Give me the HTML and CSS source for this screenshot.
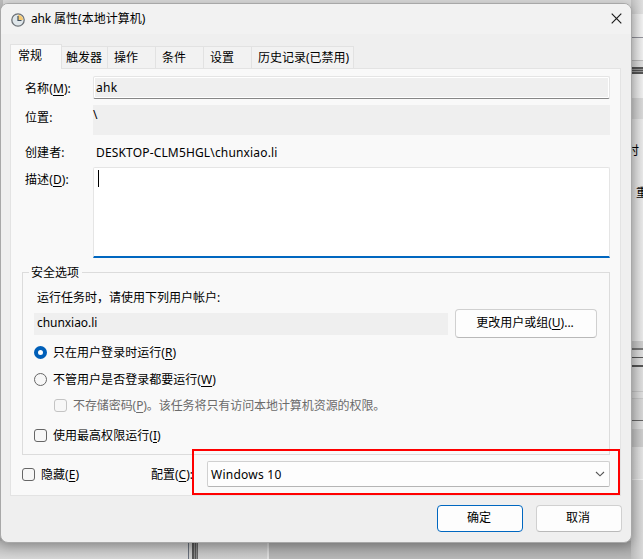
FILE: index.html
```html
<!DOCTYPE html>
<html lang="zh-CN">
<head>
<meta charset="utf-8">
<title>ahk 属性(本地计算机)</title>
<link rel="stylesheet" href="styles.css">
</head>
<body>
<div class="desktop">
  <div class="behind-left"><i></i><i></i><i></i><i></i><i></i></div>
  <div class="behind-right"></div>
  <span class="behind-text first">时</span>
  <span class="behind-text second">重</span>
  <div class="behind-bottom"></div>
  <main class="dialog">
    <header class="titlebar">
      <svg class="clock" viewBox="0 0 14 14" width="14" height="14">
        <circle cx="7" cy="7" r="6.2" fill="#dfe6ea" stroke="#6c7176" stroke-width="1.3"/>
        <path d="M7 7V1.8A5.2 5.2 0 0 1 12.2 7Z" fill="#f6ca73"/>
        <path d="M7 3V7.5H10.5" fill="none" stroke="#42505d" stroke-width="1.2"/>
      </svg>
      <h1><span class="app">ahk</span> 属性(本地计算机)</h1>
      <svg class="close" viewBox="0 0 11 11" width="11" height="11"><path d="M.7.7L10.3 10.3M10.3.7L.7 10.3" stroke="#191919" stroke-width="1.15"/></svg>
    </header>
    <nav class="tabs">
      <span class="tab selected">常规</span>
      <span class="tab t2">触发器</span>
      <span class="tab t3">操作</span>
      <span class="tab t4">条件</span>
      <span class="tab t5">设置</span>
      <span class="tab t6">历史记录(已禁用)</span>
    </nav>
    <section class="panel">
      <div class="row name"><label>名称(<u>M</u>):</label><div class="field input">ahk</div></div>
      <div class="row location"><label>位置:</label><div class="field">\</div></div>
      <div class="row creator"><label>创建者:</label><span class="account">DESKTOP-CLM5HGL\chunxiao.li</span></div>
      <div class="row description"><label>描述(<u>D</u>):</label><div class="textarea"><i class="caret"></i></div></div>
      <div class="group">
        <span class="legend">安全选项</span>
        <p class="prompt">运行任务时，请使用下列用户帐户:</p>
        <div class="userline"><div class="user">chunxiao.li</div><button class="change">更改用户或组(<u>U</u>)...</button></div>
        <label class="option o1"><i class="radio on"></i><span>只在用户登录时运行(<u>R</u>)</span></label>
        <label class="option o2"><i class="radio"></i><span>不管用户是否登录都要运行(<u>W</u>)</span></label>
        <label class="option o3 disabled"><i class="box"></i><span>不存储密码(<u>P</u>)。该任务将只有访问本地计算机资源的权限。</span></label>
        <label class="option o4"><i class="box"></i><span>使用最高权限运行(<u>I</u>)</span></label>
      </div>
      <div class="bottom">
        <label class="option hide"><i class="box"></i><span>隐藏(<u>E</u>)</span></label>
        <span class="config">配置(<u>C</u>):</span>
        <div class="select"><span>Windows 10</span><svg viewBox="0 0 10 6" width="10" height="6"><path d="M1 1L5 4.8L9 1" fill="none" stroke="#555" stroke-width="1.1"/></svg></div>
      </div>
    </section>
    <footer class="actions"><button class="primary">确定</button><button>取消</button></footer>
  </main>
  <div class="highlight"></div>
</div>
</body>
</html>
```

FILE: styles.css
```css
* { box-sizing: border-box; }
body {
  margin: 0;
  font: 12px/16px "Noto Sans", "Noto Sans CJK SC", sans-serif;
  color: #000;
}
.desktop {
  position: relative;
  width: 643px;
  height: 559px;
  overflow: hidden;
  background: linear-gradient(#d9d9d9 0, #d9d9d9 20px, #d2d2d2 500px, #aaa 543px, #c4c4c4 559px);
}
.behind-left { position: absolute; left: 0; top: 0; width: 3px; height: 110px; background: #bcbcbc; }
.behind-left i { display: block; height: 2px; margin-top: 19px; background: #6f8596; }
.behind-right {
  position: absolute;
  left: 631px;
  top: 0;
  width: 12px;
  height: 559px;
  background:
    linear-gradient(90deg, #0002, #0000),
    linear-gradient(#dedede 0 14px, #f0f0f0 14px 37px, #92929a 37px 38px, #eee 38px 60px, #bbb 60px 61px, #ddd 61px 67px, #555 67px 69px, #999 69px 70px, #555 70px 71px, #999 71px 72px, #555 72px 74px, #eee 74px 98px, #d8d8d8 98px 119px, #e8e8e8 119px 341px, #ccc 341px 348px, #777 348px 350px, #ddd 350px 357px, #555 357px 358px, #ddd 358px 365px, #555 365px 367px, #ddd 367px 391px, #c8c8c8 391px 392px, #ddd 392px 398px, #c8c8c8 398px 399px, #d6d6d6 399px 420px, #666 420px 421px, #ddd 421px 429px, #ccc 429px 447px, #e2e2e2 447px 479px, #f0f0f0 479px 480px, #d8d8d8 480px);
}
.behind-text { position: absolute; white-space: nowrap; }
.behind-text.first { left: 627px; top: 143px; }
.behind-text.second { left: 636px; top: 185px; }
.behind-bottom {
  position: absolute;
  left: 0;
  top: 541px;
  width: 631px;
  height: 18px;
  background:
    linear-gradient(#0002, #0000),
    linear-gradient(90deg, #d5d5d5 0 188px, #69717d 188px 189px, #ccc 189px 192px, #555 192px 194px, #888 194px 195px, #555 195px 196px, #888 196px 197px, #666 197px 198px, #ccc 198px 267px, #ddd 267px 269px, #b7b7b7 269px);
}
.dialog {
  position: absolute;
  left: 0;
  top: 3px;
  width: 632px;
  height: 540px;
  border: 1px solid #a8a8a8;
  border-radius: 8px;
  background: #efefef;
  box-shadow: 0 3px 12px #0004;
  overflow: hidden;
}
.titlebar { display: flex; align-items: center; height: 30px; padding: 0 9px 0 10px; background: #f2f2f2; }
h1 { flex: 1; margin: 0 0 0 6px; font-size: 12px; font-weight: 400; white-space: nowrap; }
.app { letter-spacing: -.2px; }
.clock { margin-top: 1px; }
.close { margin-top: -1px; }
.tabs { display: flex; align-items: flex-end; height: 34px; margin-left: 9px; }
.tab { height: 22px; padding: 3px 0 0 6px; border: solid #e2e2e2; border-width: 1px 1px 0 0; background: #f2f2f2; white-space: nowrap; }
.tab.selected { position: relative; width: 52px; height: 25px; margin-bottom: -1px; padding: 3px 0 0 7px; border-left-width: 1px; background: #f9f9f9; }
.t2 { width: 46px; padding-left: 4px; }
.t3, .t4, .t5 { width: 48px; }
.t6 { width: 102px; }
.panel { width: 611px; height: 428px; margin-left: 9px; border: 1px solid #e3e3e3; background: #f9f9f9; }
.row { display: grid; grid-template-columns: 68px 517px; margin-left: 14px; }
.row > label { white-space: nowrap; letter-spacing: .1px; }
u { text-underline-offset: 2px; text-decoration-skip-ink: none; text-decoration-thickness: 1px; }
.name { height: 29px; padding-top: 7px; }
.name label { padding-top: 5px; }
.field { height: 30px; background: #efefef; line-height: 20px; }
.input { height: 23px; padding-left: 2px; border: 1px solid #e5e5e5; border-bottom-color: #868686; border-radius: 2px; box-shadow: inset 0 0 0 1px #fff; line-height: 22px; letter-spacing: .25px; }
.location { height: 38px; padding-top: 7px; }
.location label { padding-top: 5px; }
.creator { height: 25px; padding-top: 9px; }
.account { padding-left: 3px; white-space: nowrap; letter-spacing: .16px; }
.description { height: 97px; padding-top: 6px; }
.description label { padding-top: 5px; }
.textarea { height: 91px; padding: 2px 0 0 4px; border: 1px solid #e5e5e5; border-bottom: 2px solid #0067c0; border-radius: 2px 2px 0 0; background: #fff; }
.caret { display: block; width: 1px; height: 17px; background: #000; }
.group { position: relative; height: 183px; width: 588px; margin: 14px 0 0 11px; padding: 17px 12px 0 11px; border: 1px solid #dcdcdc; }
.legend { position: absolute; left: 6px; top: -8px; padding: 0 3px 0 2px; background: #f9f9f9; }
.prompt { margin: 0 0 0 3px; white-space: nowrap; }
.userline { display: flex; justify-content: space-between; align-items: center; height: 29px; margin-top: 3px; }
.user { width: 414px; height: 22px; padding-left: 3px; background: #efefef; line-height: 20px; letter-spacing: -.05px; }
button { width: 86px; height: 27px; padding: 0 2px 1px 0; border: 1px solid #d0d0d0; border-bottom-color: #b9b9b9; border-radius: 4px; background: #fdfdfd; color: #000; font: inherit; }
.change { width: 142px; height: 29px; }
.option { display: flex; align-items: center; height: 16px; gap: 6px; white-space: nowrap; }
.option span { padding-top: 1px; letter-spacing: .03px; }
.box, .radio { flex: none; width: 13px; height: 13px; border: 1px solid #666; background: #f7f7f7; border-radius: 3px; }
.radio { border-radius: 50%; }
.radio.on { border: 4px solid #005fb8; background: #fff; }
.o1 { margin-top: 6px; }
.o2 { margin-top: 11px; }
.o3 { margin: 10px 0 0 20px; }
.o4 { margin-top: 14px; }
.disabled { color: #6b6b6b; }
.option.disabled span { letter-spacing: -.08px; }
.disabled .box { border-color: #c4c4c4; }
.bottom { display: flex; align-items: center; margin: 6px 0 0 11px; height: 26px; }
.hide { width: 129px; }
.config { width: 56px; padding-top: 1px; }
.select { display: flex; align-items: center; justify-content: space-between; width: 403px; height: 26px; padding: 0 4px 0 3px; border: 1px solid #d0d0d0; border-bottom-color: #b5b5b5; border-radius: 2px; background: #fdfdfd; letter-spacing: .25px; }
.select span { padding-top: 2px; }
.actions { display: flex; gap: 13px; justify-content: flex-end; margin: 9px 9px 0 0; }
.actions .primary { border-color: #0067c0; }
.highlight { position: absolute; left: 192px; top: 449px; width: 428px; height: 46px; border: 2px solid #f00; }
```
